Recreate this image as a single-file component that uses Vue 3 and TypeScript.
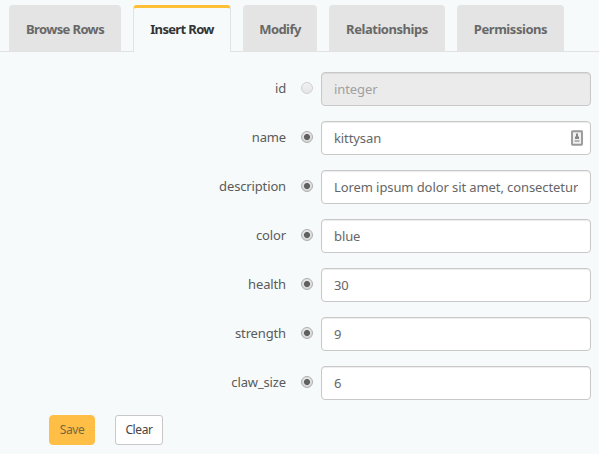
<script setup lang="ts">
import { ref } from 'vue'

interface Field {
  name: string
  value: string
  placeholder?: string
  disabled?: boolean
  badge?: boolean
}

const tabs = ['Browse Rows', 'Insert Row', 'Modify', 'Relationships', 'Permissions']
const active = ref('Insert Row')

const fields = ref<Field[]>([
  { name: 'id', value: '', placeholder: 'integer', disabled: true },
  { name: 'name', value: 'kittysan', badge: true },
  { name: 'description', value: 'Lorem ipsum dolor sit amet, consectetur' },
  { name: 'color', value: 'blue' },
  { name: 'health', value: '30' },
  { name: 'strength', value: '9' },
  { name: 'claw_size', value: '6' },
])

function clear() {
  fields.value.forEach((f) => (f.value = ''))
}
</script>

<template>
  <main class="page">
    <nav class="tabs">
      <a
        v-for="tab in tabs"
        :key="tab"
        class="tab"
        :class="[tab.toLowerCase().replace(' ', '-'), { active: tab === active }]"
        @click="active = tab"
      ><span>{{ tab }}</span></a>
    </nav>
    <form class="form" @submit.prevent>
      <div v-for="field in fields" :key="field.name" class="row">
        <label class="label" :for="field.name">{{ field.name }}</label>
        <span class="radio" :class="{ off: field.disabled }"></span>
        <div class="control">
          <input
            :id="field.name"
            v-model="field.value"
            class="input"
            type="text"
            autocomplete="off"
            spellcheck="false"
            :placeholder="field.placeholder"
            :disabled="field.disabled"
          />
          <svg v-if="field.badge" class="badge" width="12" height="16" viewBox="0 0 12 16">
            <rect x="1" y="1.2" width="10" height="13.6" rx="0.5" fill="#f0f0f0" stroke="#999" stroke-width="1.9" />
            <path d="M5 3.5h2v2.5l1 1v2H4V7l1-1z" fill="#858585" />
            <path d="M3.5 10h5v2h-5z" fill="#b4b4b4" />
          </svg>
        </div>
      </div>
      <div class="actions">
        <button class="btn save" type="submit">Save</button>
        <button class="btn clear" type="button" @click="clear">Clear</button>
      </div>
    </form>
  </main>
</template>

<style>
body {
  background: #f6fafb;
}
</style>

<style scoped>
.page {
  box-sizing: border-box;
  width: 599px;
  height: 454px;
  overflow: hidden;
  background: #f6fafb;
  color: #5a5a5a;
  font-family: "Noto Sans", "Open Sans", sans-serif;
  font-size: 13px;
}
.tabs {
  display: flex;
  gap: 12px;
  box-sizing: border-box;
  height: 52px;
  padding: 5px 0 0 9px;
  border-bottom: 1px solid #e2e2e2;
}
.tab {
  box-sizing: border-box;
  height: 46px;
  border-radius: 4px 4px 0 0;
  background: #e4e4e4;
  color: #686868;
  font-size: 13px;
  font-weight: 700;
  line-height: 48px;
  text-align: center;
  white-space: nowrap;
  cursor: pointer;
}
.tab.active {
  height: 47px;
  border: 1px solid #e2e2e2;
  border-top: 3px solid #ffbf36;
  border-bottom: 0;
  background: #f6fafb;
  color: #333;
  line-height: 42px;
}
.browse-rows { width: 112px; letter-spacing: -0.62px; }
.insert-row { width: 98px; letter-spacing: -0.65px; }
.modify { width: 74px; letter-spacing: -0.55px; }
.relationships { width: 116px; letter-spacing: -0.45px; }
.permissions { width: 107px; letter-spacing: -0.45px; }
.form {
  display: flex;
  flex-direction: column;
  gap: 15px;
  padding-top: 20px;
}
.row {
  display: flex;
  height: 34px;
}
.label {
  width: 286px;
  letter-spacing: -0.14px;
  line-height: 33px;
  text-align: right;
}
.radio {
  box-sizing: border-box;
  width: 12px;
  height: 12px;
  margin: 10px 8px 0 15px;
  border: 1px solid #adadad;
  border-radius: 50%;
  background: radial-gradient(circle at center, #606060 2.6px, transparent 3.5px), linear-gradient(#e6e6e6, #d6d6d6);
}
.radio.off {
  border-color: #d0d0d0;
  background: linear-gradient(#f1f1f1, #e5e5e5);
}
.control {
  position: relative;
  width: 270px;
}
.input {
  display: block;
  box-sizing: border-box;
  width: 270px;
  height: 34px;
  margin: 0;
  padding: 0 12px 1px;
  border: 1px solid #c8c8c8;
  border-radius: 4px;
  outline: 0;
  background: #fff;
  box-shadow: inset 0 1px 1px rgba(0, 0, 0, 0.075);
  color: #666;
  font: inherit;
  letter-spacing: -0.09px;
}
.input:disabled {
  background: #ebebeb;
}
.input::placeholder {
  color: #a0a0a0;
  opacity: 1;
}
.badge {
  position: absolute;
  top: 9px;
  right: 8px;
}
.actions {
  display: flex;
  gap: 20px;
  padding-left: 49px;
}
.btn {
  box-sizing: border-box;
  height: 30px;
  margin: 0;
  padding: 0;
  border-radius: 4px;
  font-family: inherit;
  font-size: 12px;
  letter-spacing: -0.4px;
  line-height: 28px;
}
.save {
  width: 46px;
  border: 1px solid #ffbf46;
  background: #ffbf46;
  color: #77673f;
}
.clear {
  width: 48px;
  border: 1px solid #c8c8c8;
  border-radius: 3px;
  background: #fff;
  color: #444;
}
</style>
